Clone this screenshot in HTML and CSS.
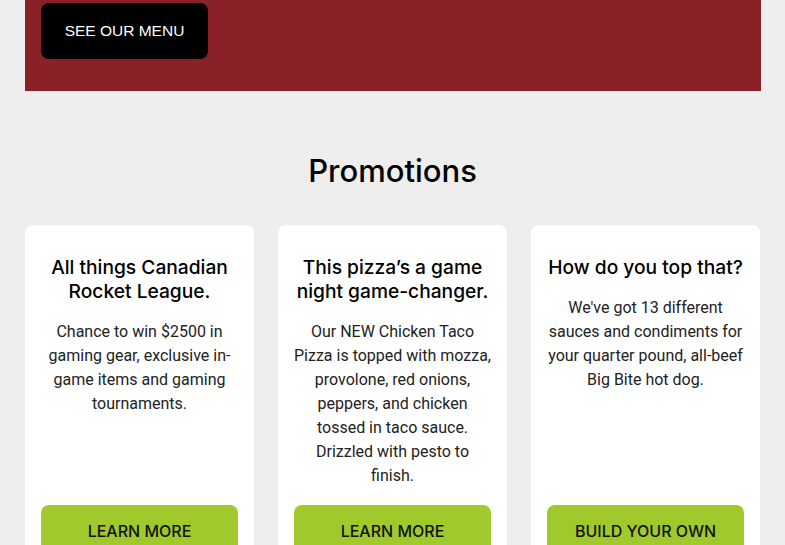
FILE: index.html
```html
<!DOCTYPE html>
<html lang="en">
<head>
<meta charset="utf-8">
<title>Promotions</title>
<link rel="stylesheet" href="styles.css">
</head>
<body>
<div class="page">
  <section class="banner">
    <a class="menu-btn" href="#">SEE OUR MENU</a>
  </section>
  <h2 class="section-title">Promotions</h2>
  <div class="cards">
    <article class="card">
      <h3 class="card-title">All things Canadian Rocket League.</h3>
      <p class="card-text">Chance to win $2500 in gaming gear, exclusive in-game items and gaming tournaments.</p>
      <a class="card-btn" href="#">LEARN MORE</a>
    </article>
    <article class="card">
      <h3 class="card-title">This pizza’s a game night game-changer.</h3>
      <p class="card-text">Our NEW Chicken Taco Pizza is topped with mozza, provolone, red onions, peppers, and chicken tossed in taco sauce. Drizzled with pesto to finish.</p>
      <a class="card-btn" href="#">LEARN MORE</a>
    </article>
    <article class="card">
      <h3 class="card-title">How do you top that?</h3>
      <p class="card-text">We've got 13 different sauces and condiments for your quarter pound, all-beef Big Bite hot dog.</p>
      <a class="card-btn" href="#">BUILD YOUR OWN</a>
    </article>
  </div>
</div>
</body>
</html>
```

FILE: styles.css
```css
* { box-sizing: border-box; }
html, body {
  margin: 0;
  padding: 0;
  background: #eeeeee;
  font-family: Inter, "Noto Sans", sans-serif;
  color: #1a1a1a;
}
.page {
  padding: 0 25px;
}
.banner {
  background: #8b2128;
  padding: 3px 16px 32px;
  width: 736px;
}
.menu-btn {
  display: inline-flex;
  align-items: center;
  justify-content: center;
  width: 167px;
  height: 56px;
  background: #000;
  color: #fff;
  border-radius: 8px;
  font-family: "Liberation Sans", Arial, sans-serif;
  font-size: 15.5px;
  text-decoration: none;
}
.section-title {
  margin: 60px 0 0;
  text-align: center;
  font-size: 31px;
  line-height: 40px;
  font-weight: 500;
  color: #000;
}
.cards {
  display: grid;
  grid-template-columns: repeat(3, 229px);
  gap: 24px;
  margin-top: 34px;
}
.card {
  background: #fff;
  border-radius: 8px;
  padding: 30px 16px 16px;
  display: flex;
  flex-direction: column;
  text-align: center;
  min-height: 348px;
}
.card-title {
  margin: 0;
  font-size: 19.2px;
  line-height: 24px;
  font-weight: 500;
  color: #000;
}
.card-text {
  margin: 17px 0 17px;
  font-family: Roboto, Inter, sans-serif;
  font-size: 16px;
  line-height: 24px;
  color: #222;
}
.card-btn {
  margin-top: auto;
  display: flex;
  align-items: center;
  justify-content: center;
  height: 52px;
  background: #a0c92b;
  color: #111;
  border-radius: 8px;
  font-size: 16px;
  font-weight: 500;
  text-decoration: none;
}
```
